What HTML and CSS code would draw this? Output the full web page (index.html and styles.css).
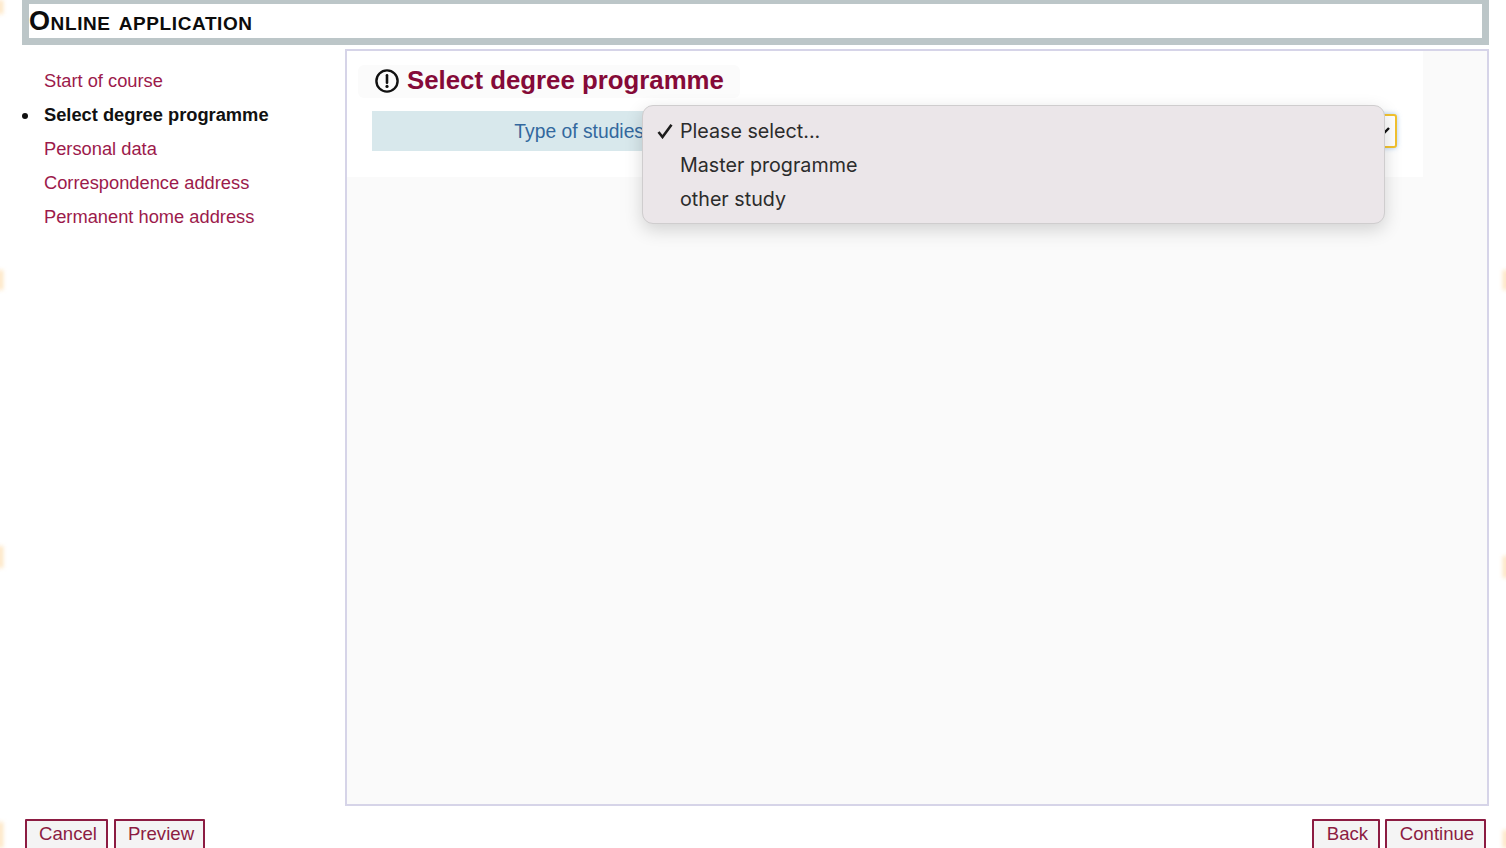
FILE: index.html
```html
<!DOCTYPE html>
<html lang="en">
<head>
<meta charset="utf-8">
<title>Online application</title>
<link rel="stylesheet" href="styles.css">
</head>
<body>
<span class="speck speck-l1"></span><span class="speck speck-l2"></span><span class="speck speck-l3"></span><span class="speck speck-l4"></span>
<span class="speck speck-r1"></span><span class="speck speck-r2"></span><span class="speck speck-r3"></span>
<div class="page">
  <header class="title-bar"><h1>Online application</h1></header>
  <div class="content">
    <nav class="side">
      <ul>
        <li><a href="#">Start of course</a></li>
        <li class="current">Select degree programme</li>
        <li><a href="#">Personal data</a></li>
        <li><a href="#">Correspondence address</a></li>
        <li><a href="#">Permanent home address</a></li>
      </ul>
    </nav>
    <main class="panel">
      <div class="form-area">
        <div class="heading">
          <svg class="alert" viewBox="0 0 24 24" width="24" height="24" aria-hidden="true"><circle cx="12" cy="12" r="10.6" fill="none" stroke="#111" stroke-width="2.4"/><path d="M12 6.2v7.6" stroke="#111" stroke-width="2.6" stroke-linecap="round"/><circle cx="12" cy="17.4" r="1.6" fill="#111"/></svg>
          <h2>Select degree programme</h2>
        </div>
        <div class="field-row">
          <label class="field-label">Type of studies</label>
          <div class="select-box">
            <svg class="chev" viewBox="0 0 10 8" width="10" height="8" aria-hidden="true"><path d="M1 2l4 4 4-4" fill="none" stroke="#111" stroke-width="2.4"/></svg>
          </div>
        </div>
      </div>
      <ul class="popup">
        <li class="selected"><svg class="tick" viewBox="0 0 16 16" width="16" height="16" aria-hidden="true"><path d="M1.5 9l4 5L14.5 1.8" fill="none" stroke="#1c1c1c" stroke-width="2.6"/></svg>Please select...</li>
        <li>Master programme</li>
        <li>other study</li>
      </ul>
    </main>
  </div>
  <footer class="actions">
    <div class="group"><button class="btn btn-cancel">Cancel</button><button class="btn btn-preview">Preview</button></div>
    <div class="group"><button class="btn btn-back">Back</button><button class="btn btn-continue">Continue</button></div>
  </footer>
</div>
</body>
</html>
```
FILE: styles.css
```css
* { box-sizing: border-box; }
html, body { margin: 0; height: 848px; overflow: hidden; background: #fff; }
body { font-family: "Liberation Sans", Arial, sans-serif; position: relative; }

.page { padding: 0 17px 0 22px; margin-top: -3px; }

.title-bar { height: 48px; border: 7px solid #bcc6c8; background: #fff; display: flex; align-items: center; }
.title-bar h1 { margin: 0; font-size: 27px; line-height: 34px; font-weight: 700; font-variant: small-caps; color: #0c0c0c; letter-spacing: 0.6px; }

.content { display: flex; margin-top: 4px; height: 757px; }
.side { width: 323px; flex: none; padding-top: 15px; }
.side ul { list-style: none; margin: 0; padding: 0 0 0 22px; }
.side li { height: 34px; line-height: 34px; font-size: 18.3px; position: relative; color: #9c1a4b; }
.side a { color: #9c1a4b; text-decoration: none; }
.side .current { color: #111; font-weight: 700; }
.side .current::before { content: ""; position: absolute; left: -22px; top: 15px; width: 6px; height: 6px; border-radius: 50%; background: #111; }

.panel { flex: 1; position: relative; border: 2px solid #d6d4e8; background: #fafafa; }
.form-area { width: 1076px; height: 126px; background: #fff; padding: 14px 14px 0 11px; }
.heading { width: 382px; height: 33px; background: #fbfbfb; border-radius: 6px; display: flex; align-items: center; padding-left: 17px; gap: 8px; }
.heading h2 { margin: -2px 0 0; font-size: 25.8px; line-height: 33px; font-weight: 700; color: #850a38; white-space: nowrap; }
.alert { flex: none; margin-top: -1px; }

.field-row { margin: 13px 0 0 14px; width: 1025px; height: 40px; display: flex; align-items: center; background: linear-gradient(to right, #d8e8ec 0, #d8e8ec 300px, #fff 300px); position: relative; }
.field-label { width: 272px; padding-top: 2px; text-align: right; font-size: 19.3px; color: #33689e; white-space: nowrap; }
.select-box { position: absolute; right: 0; top: 3px; width: 60px; height: 34px; background: #fff; border: 2px solid #f2c230; border-radius: 3px; box-shadow: 0 0 5px rgba(110, 170, 230, 0.6); }
.chev { position: absolute; right: 5px; top: 10px; }

.popup { position: absolute; left: 295px; top: 54px; width: 743px; height: 119px; margin: 0; padding: 8px 0 0 37px; list-style: none; background: #ebe6e9; border: 1px solid #cfcdce; border-radius: 11px; box-shadow: 0 6px 18px rgba(0, 0, 0, 0.16); font-size: 19.7px; color: #2c2c2c; font-family: Inter, "Liberation Sans", sans-serif; }
.popup li { height: 34px; line-height: 34px; position: relative; }
.tick { position: absolute; left: -23px; top: 9px; }

.actions { display: flex; justify-content: space-between; margin-top: 13px; padding: 0 3px; }
.group { display: flex; gap: 6px; }
.btn { height: 40px; border: 2px solid #8c1c42; border-radius: 1px; background: #f4f4f4; color: #8c1c42; font: 18.6px "Liberation Sans", Arial, sans-serif; padding: 0 0 10px 3px; }
.btn-cancel { width: 83px; }
.btn-preview { width: 91px; }
.btn-back { width: 68px; }
.btn-continue { width: 101px; margin-left: -1px; }

.speck { position: absolute; width: 5px; background: #fde3bd; filter: blur(2px); }
.speck-l1 { left: -2px; top: 0; height: 14px; }
.speck-l2 { left: -2px; top: 270px; height: 20px; }
.speck-l3 { left: -2px; top: 546px; height: 22px; }
.speck-l4 { left: -2px; top: 822px; height: 26px; }
.speck-r1 { right: -2px; top: 270px; height: 20px; }
.speck-r2 { right: -2px; top: 556px; height: 22px; }
.speck-r3 { right: -2px; top: 830px; height: 18px; }
```
